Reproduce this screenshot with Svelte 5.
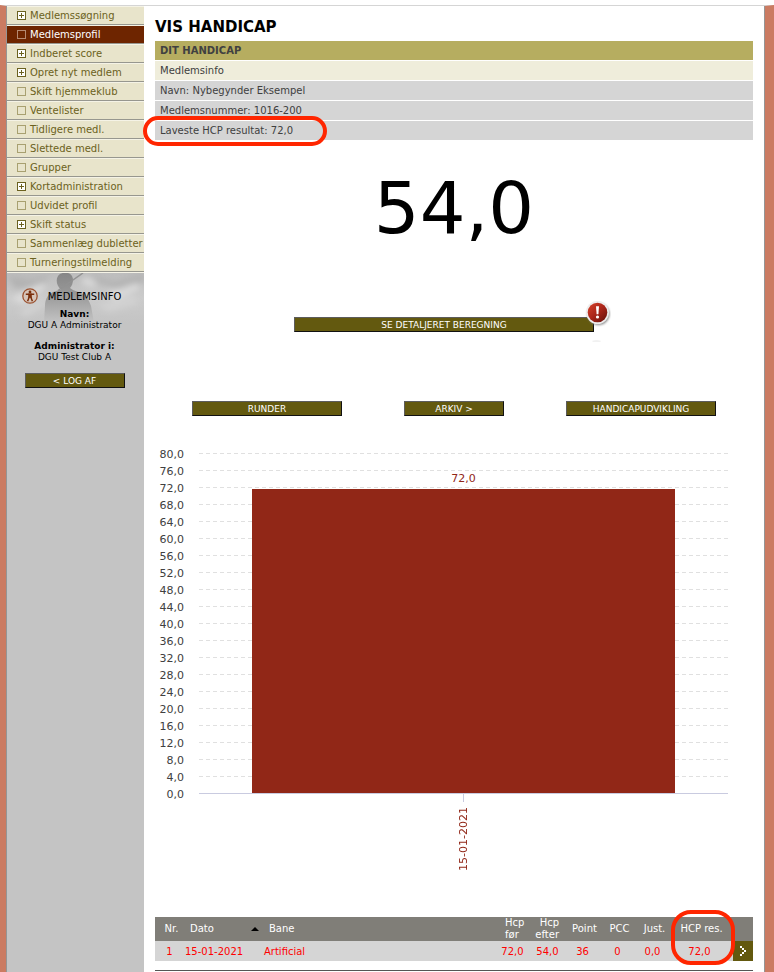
<script>
    const menu = [
        { label: "Medlemssøgning", sub: true },
        { label: "Medlemsprofil", active: true },
        { label: "Indberet score", sub: true },
        { label: "Opret nyt medlem", sub: true },
        { label: "Skift hjemmeklub" },
        { label: "Ventelister" },
        { label: "Tidligere medl." },
        { label: "Slettede medl." },
        { label: "Grupper" },
        { label: "Kortadministration", sub: true },
        { label: "Udvidet profil" },
        { label: "Skift status", sub: true },
        { label: "Sammenlæg dubletter" },
        { label: "Turneringstilmelding" },
    ];

    const rounds = [
        {
            date: "15-01-2021",
            course: "Artificial",
            before: 72,
            after: 54,
            points: 36,
            pcc: 0,
            adjust: 0,
            result: 72,
        },
    ];

    const max = 80;
    const step = 4;
    const ticks = Array.from({ length: max / step + 1 }, (_, i) => max - i * step);

    const format = (n) => n.toFixed(1).replace(".", ",");
</script>

<div class="page">
    <div class="frame">
        <aside class="sidebar">
            <nav>
                {#each menu as item}
                    <a href="#menu" class="item" class:active={item.active}>
                        <svg class="box" class:sub={item.sub} width="9" height="9" viewBox="0 0 9 9" aria-hidden="true">
                            <rect x="0.5" y="0.5" width="8" height="8" />
                            {#if item.sub}
                                <path d="M2 4.5h5M4.5 2v5" />
                            {/if}
                        </svg>
                        {item.label}
                    </a>
                {/each}
            </nav>

            <section class="member">
                <svg class="golfer" viewBox="0 0 137 50" preserveAspectRatio="none" aria-hidden="true">
                    <defs>
                        <linearGradient id="sky" x1="0" y1="0" x2="0" y2="1">
                            <stop offset="0" stop-color="#bdbdbd" />
                            <stop offset="0.5" stop-color="#cbcbcb" />
                            <stop offset="1" stop-color="#c4c4c4" />
                        </linearGradient>
                        <linearGradient id="body" x1="0" y1="0" x2="0" y2="1">
                            <stop offset="0" stop-color="#868686" />
                            <stop offset="0.45" stop-color="#9a9a9a" />
                            <stop offset="1" stop-color="#c4c4c4" />
                        </linearGradient>
                        <filter id="soft"><feGaussianBlur stdDeviation="3" /></filter>
                    </defs>
                    <rect width="137" height="50" fill="url(#sky)" />
                    <g filter="url(#soft)">
                        <path d="M0 2 24 6 42 2 36 12 8 16zM84 2l24 6 29-8v10l-24 6-22-6z" fill="#b2b2b2" />
                        <path d="M4 26 34 10l6 3-24 18zM100 20l30-10 4 5-26 12zM78 4l12 6-4 4-12-4z" fill="#dcdcdc" />
                        <path d="M12 38l24-12 2 6-20 12zM90 32l36-9 6 7-30 9z" fill="#d2d2d2" />
                    </g>
                    <path
                        d="M54 16.5c-5-4-6-12-1-15.5 6-3 12-1 13 5 0 4-1 7-3 9l3 2 8 3c5 2 8 7 10 13l3 17H37l1-17c0-7 3-12 8-14z"
                        fill="url(#body)"
                    />
                    <path d="M51 17.5 76 0" fill="none" stroke="#929292" stroke-width="1.5" />
                </svg>
                <h2>
                    <svg width="16" height="16" viewBox="0 0 16 16" aria-hidden="true">
                        <circle cx="8" cy="8" r="7.2" fill="#d6c5ba" stroke="#9b5230" stroke-width="1.3" />
                        <circle cx="8" cy="3.9" r="1.4" fill="#7a2f0c" />
                        <path
                            d="M3.8 6.2h8.4M7.2 9 5.6 13.2M8.8 9l1.6 4.2"
                            fill="none"
                            stroke="#7a2f0c"
                            stroke-width="1.5"
                        />
                        <path d="M6.2 5.5h3.6v4.3H6.2z" fill="#7a2f0c" />
                    </svg>
                    MEDLEMSINFO
                </h2>
                <p><b>Navn:</b><br />DGU A Administrator</p>
                <p><b>Administrator i:</b><br />DGU Test Club A</p>
                <button class="btn small">&lt; LOG AF</button>
            </section>
        </aside>

        <main>
            <h1>VIS HANDICAP</h1>
            <section class="info">
                <h2>DIT HANDICAP</h2>
                <h3>Medlemsinfo</h3>
                <p>Navn: Nybegynder Eksempel</p>
                <p>Medlemsnummer: 1016-200</p>
                <p>Laveste HCP resultat: 72,0<span class="mark lowest"></span></p>
            </section>

            <div class="handicap">54,0</div>

            <div class="detail">
                <button class="btn large">SE DETALJERET BEREGNING</button>
                <svg class="alert" width="26" height="44" viewBox="0 0 26 44" aria-hidden="true">
                    <defs>
                        <linearGradient id="red" x1="0" y1="0" x2="1" y2="1">
                            <stop offset="0" stop-color="#d8432c" />
                            <stop offset="0.5" stop-color="#a92519" />
                            <stop offset="1" stop-color="#5e0f0a" />
                        </linearGradient>
                        <filter id="shade" x="-20%" y="-20%" width="150%" height="150%">
                            <feGaussianBlur stdDeviation="1" />
                        </filter>
                    </defs>
                    <circle cx="13.5" cy="14" r="11" fill="#888" filter="url(#shade)" />
                    <circle cx="12.5" cy="12.5" r="11.5" fill="#ededed" />
                    <circle cx="12.5" cy="12.5" r="9.8" fill="url(#red)" />
                    <path d="M11 6.2h3l-.6 8h-1.8z" fill="#fff" />
                    <circle cx="12.5" cy="17" r="1.6" fill="#fff" />
                    <ellipse cx="11.5" cy="41" rx="4.5" ry="0.6" fill="#e4e4e4" />
                </svg>
            </div>

            <div class="actions">
                <button class="btn medium">RUNDER</button>
                <button class="btn small">ARKIV &gt;</button>
                <button class="btn medium">HANDICAPUDVIKLING</button>
            </div>

            <div class="chart">
                <div class="scale">
                    {#each ticks as tick}
                        <span>{format(tick)}</span>
                    {/each}
                </div>
                <div class="plot">
                    <div class="grid">
                        {#each ticks as tick}
                            <div class="line" class:base={tick === 0}></div>
                        {/each}
                        <div class="bars">
                            {#each rounds as round}
                                <div class="bar" style="height: {(round.result / max) * 100}%">
                                    <span>{format(round.result)}</span>
                                </div>
                            {/each}
                        </div>
                    </div>
                    <div class="dates">
                        {#each rounds as round}
                            <div class="date"><span>{round.date}</span></div>
                        {/each}
                    </div>
                </div>
            </div>

            <div class="rounds">
                <table>
                    <colgroup>
                        <col class="c-nr" />
                        <col class="c-date" />
                        <col />
                        <col class="c-num" span="5" />
                        <col class="c-res" />
                        <col class="c-go" />
                    </colgroup>
                    <thead>
                        <tr>
                            <th class="nr">Nr.</th>
                            <th class="when">
                                <div>
                                    Dato
                                    <svg width="8" height="4" viewBox="0 0 8 4" aria-hidden="true">
                                        <path d="M0 4 4 0l4 4z" />
                                    </svg>
                                </div>
                            </th>
                            <th class="course">Bane</th>
                            <th class="before">Hcp<br />før</th>
                            <th class="after">Hcp<br />efter</th>
                            <th>Point</th>
                            <th>PCC</th>
                            <th>Just.</th>
                            <th class="result">HCP res.</th>
                            <th></th>
                        </tr>
                    </thead>
                    <tbody>
                        {#each rounds as round, i}
                            <tr>
                                <td class="nr">{i + 1}</td>
                                <td class="when">{round.date}</td>
                                <td class="course">{round.course}</td>
                                <td>{format(round.before)}</td>
                                <td>{format(round.after)}</td>
                                <td>{round.points}</td>
                                <td>{round.pcc}</td>
                                <td>{format(round.adjust)}</td>
                                <td class="result">{format(round.result)}</td>
                                <td class="go">
                                    <button aria-label="Vis runde">
                                        <svg width="6" height="10" viewBox="0 0 6 10" shape-rendering="crispEdges" aria-hidden="true">
                                            <path d="M0 0h2v2h2v2h2v2H4v2H2v2H0V8h2V6h2V4H2V2H0z" />
                                        </svg>
                                    </button>
                                </td>
                            </tr>
                        {/each}
                    </tbody>
                </table>
                <span class="mark result-mark"></span>
            </div>
        </main>
    </div>
</div>

<style>
    :global(body) {
        margin: 0;
        background: #fff;
    }
    .page {
        box-sizing: border-box;
        min-height: 100vh;
        display: flex;
        flex-direction: column;
        padding-top: 5px;
        font-family: Verdana, "DejaVu Sans", sans-serif;
        font-size: 10px;
        color: #404040;
    }
    .frame {
        flex: 1;
        display: flex;
        border-top: 1px solid #d5d5d5;
        border-left: 6px solid #cb7b62;
        border-right: 9px solid #cb7b62;
    }
    h1,
    h2,
    h3,
    p {
        margin: 0;
    }

    .sidebar {
        width: 137px;
        flex: none;
        background: #c4c4c4;
        border-left: 1px solid #959595;
    }
    .item {
        display: flex;
        align-items: center;
        gap: 4px;
        height: 17px;
        padding-left: 10px;
        border-top: 1px solid #f5f3e6;
        border-bottom: 1px solid #97978f;
        background: #e8e4cb;
        color: #6b6120;
        text-decoration: none;
        white-space: nowrap;
    }
    .item.active {
        background: #6e2500;
        color: #fff;
    }
    .box {
        flex: none;
        fill: none;
        stroke: #a8a070;
    }
    .box.sub {
        fill: #fff;
        stroke: #6b6120;
    }
    .active .box {
        stroke: #b58a72;
    }
    .member {
        position: relative;
        display: flex;
        flex-direction: column;
        align-items: center;
        padding: 15px 2px 0 0;
        border-top: 1px solid #f5f3e6;
        color: #000;
        font-size: 9px;
        line-height: 11px;
        text-align: center;
    }
    .golfer {
        position: absolute;
        top: 0;
        left: 0;
        width: 100%;
        height: 50px;
    }
    .member h2 {
        position: relative;
        display: flex;
        align-items: center;
        gap: 10px;
        margin-bottom: 5px;
        padding-right: 6px;
        font-size: 10px;
        font-weight: normal;
    }
    .member p {
        position: relative;
        margin-bottom: 10px;
    }

    .btn {
        box-sizing: border-box;
        height: 15px;
        padding: 0;
        border: 1px solid;
        border-color: #5c5c5c #111 #111 #5c5c5c;
        background: #63590f;
        color: #fff;
        font-family: inherit;
        font-size: 9px;
        line-height: 12px;
    }
    .small {
        width: 100px;
    }
    .medium {
        width: 150px;
    }
    .large {
        width: 300px;
    }

    main {
        flex: 1;
        min-width: 0;
        padding: 10px 11px 0;
        border-right: 1px solid #959595;
    }
    h1 {
        margin-bottom: 3px;
        color: #000;
        font-size: 15px;
        line-height: 22px;
    }
    .info {
        display: flex;
        flex-direction: column;
        gap: 1px;
    }
    .info h2,
    .info h3,
    .info p {
        position: relative;
        padding-left: 5px;
        background: #d5d5d5;
        font-size: 10px;
        font-weight: normal;
        line-height: 19px;
    }
    .info h2 {
        background: #b6ad60;
        font-weight: bold;
    }
    .info h3 {
        background: #efeddb;
    }
    .mark {
        position: absolute;
        box-sizing: border-box;
        border: 4px solid #ff2600;
        pointer-events: none;
    }
    .lowest {
        top: -5px;
        left: -12px;
        width: 184px;
        height: 30px;
        border-radius: 15px;
    }
    .handicap {
        margin-top: 28px;
        color: #000;
        font-size: 72px;
        line-height: 80px;
        text-align: center;
    }
    .detail {
        position: relative;
        width: 300px;
        margin: 69px auto 0;
        padding-right: 20px;
        display: flex;
    }
    .alert {
        position: absolute;
        top: -17px;
        left: 291px;
    }
    .actions {
        display: flex;
        justify-content: center;
        gap: 62px;
        margin-top: 69px;
    }

    .chart {
        display: flex;
        gap: 15px;
        margin-top: 29px;
        padding-right: 25px;
        font-size: 11px;
        line-height: 17px;
    }
    .scale {
        width: 29px;
        display: flex;
        flex-direction: column;
        align-items: flex-end;
        padding-top: 1px;
    }
    .plot {
        flex: 1;
    }
    .grid {
        position: relative;
    }
    .line {
        height: 17px;
        background: repeating-linear-gradient(90deg, #e0e0e0 0 4px, transparent 4px 7px) 0 8px / 100% 1px no-repeat;
    }
    .line.base {
        background: linear-gradient(#c9cbe0, #c9cbe0) 0 8px / 100% 1px no-repeat;
    }
    .bars {
        position: absolute;
        inset: 10px 0 9px;
        display: flex;
        align-items: flex-end;
    }
    .bar {
        flex: 1;
        margin: 0 10%;
        background: #912717;
        color: #912717;
        text-align: center;
    }
    .bar span {
        display: block;
        margin-top: -19px;
    }
    .dates {
        display: flex;
    }
    .date {
        flex: 1;
        display: flex;
        flex-direction: column;
        align-items: center;
        color: #912717;
    }
    .date::before {
        content: "";
        width: 1px;
        height: 8px;
        margin-top: -8px;
        background: #c9cbe0;
    }
    .date span {
        margin-top: 5px;
        writing-mode: vertical-rl;
        transform: rotate(180deg);
    }

    .rounds {
        position: relative;
        margin-top: 46px;
        padding-bottom: 9px;
        border-bottom: 1px solid #555;
    }
    table {
        width: 100%;
        table-layout: fixed;
        border-collapse: collapse;
        text-align: center;
    }
    .c-nr {
        width: 29px;
    }
    .c-date {
        width: 75px;
    }
    .c-num {
        width: 35px;
    }
    .c-res {
        width: 63px;
    }
    .c-go {
        width: 20px;
    }
    th {
        height: 24px;
        padding: 0 0 0 4px;
        background: #807e78;
        color: #fff;
        font-weight: normal;
        line-height: 12px;
        white-space: nowrap;
    }
    td {
        height: 19px;
        padding: 1px 0 0;
        background: #d5d5d5;
        color: #f00;
    }
    th.when {
        padding-left: 6px;
    }
    th.when div {
        display: flex;
        align-items: center;
        justify-content: space-between;
    }
    td.when {
        text-align: left;
        padding-left: 1px;
    }
    .course {
        text-align: left;
    }
    th.course {
        padding-left: 10px;
    }
    td.course {
        padding-left: 5px;
    }
    th.before {
        padding-left: 10px;
        text-align: left;
    }
    th.after {
        padding-right: 6px;
        text-align: right;
    }
    .result {
        padding-left: 0;
    }
    td.result {
        padding-right: 4px;
    }
    td.go {
        padding: 0;
    }
    .go button {
        display: flex;
        align-items: center;
        justify-content: center;
        width: 20px;
        height: 20px;
        padding: 0;
        border: 0;
        background: #63590f;
    }
    .go path {
        fill: #fff;
    }
    .result-mark {
        top: -7px;
        right: 18px;
        width: 64px;
        height: 55px;
        border-radius: 20px;
    }
</style>
